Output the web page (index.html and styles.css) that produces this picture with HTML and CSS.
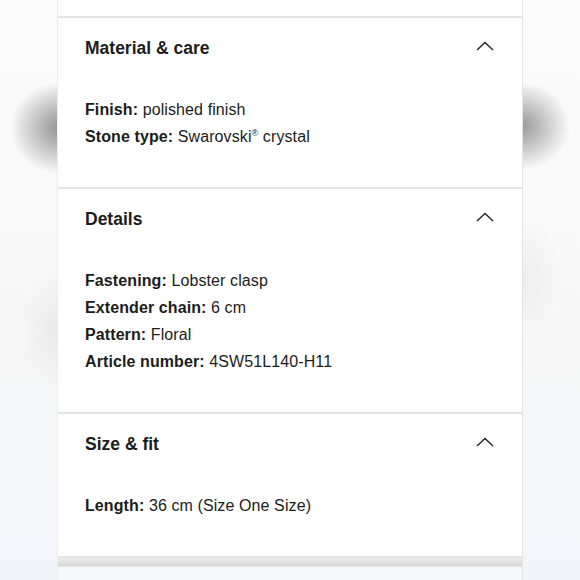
FILE: index.html
```html
<!DOCTYPE html>
<html lang="en">
<head>
    <meta charset="UTF-8">
    <meta name="viewport" content="width=device-width, initial-scale=1.0">
    <title>Product information</title>
    <link rel="stylesheet" href="styles.css">
</head>
<body>
    <div class="panel">
        <div class="panel-top"></div>

        <section class="accordion">
            <div class="accordion-header">
                <h2>Material &amp; care</h2>
                <svg class="chevron" viewBox="0 0 18 10" width="18" height="10"><polyline points="1,9 9,1.5 17,9"/></svg>
            </div>
            <ul class="accordion-body">
                <li><b>Finish:</b> polished finish</li>
                <li><b>Stone type:</b> Swarovski<sup>®</sup> crystal</li>
            </ul>
        </section>

        <section class="accordion">
            <div class="accordion-header">
                <h2>Details</h2>
                <svg class="chevron" viewBox="0 0 18 10" width="18" height="10"><polyline points="1,9 9,1.5 17,9"/></svg>
            </div>
            <ul class="accordion-body">
                <li><b>Fastening:</b> Lobster clasp</li>
                <li><b>Extender chain:</b> 6 cm</li>
                <li><b>Pattern:</b> Floral</li>
                <li><b>Article number:</b> 4SW51L140-H11</li>
            </ul>
        </section>

        <section class="accordion">
            <div class="accordion-header">
                <h2>Size &amp; fit</h2>
                <svg class="chevron" viewBox="0 0 18 10" width="18" height="10"><polyline points="1,9 9,1.5 17,9"/></svg>
            </div>
            <ul class="accordion-body">
                <li><b>Length:</b> 36 cm (Size One Size)</li>
            </ul>
        </section>

        <div class="panel-bottom"></div>
        <div class="panel-rest"></div>
    </div>
</body>
</html>
```

FILE: styles.css
```css
/* General Styles */
body {
    margin: 0;
    height: 580px;
    overflow: hidden;
    display: flex;
    justify-content: center;
    font-family: 'Liberation Sans', Arial, sans-serif;
    color: #1c1c1c;
    background-color: #f8f8f8;
    background-image:
        radial-gradient(ellipse 50px 46px at 60px 128px, rgba(0, 0, 0, 0.42), rgba(0, 0, 0, 0) 100%),
        radial-gradient(ellipse 50px 44px at 520px 126px, rgba(0, 0, 0, 0.4), rgba(0, 0, 0, 0) 100%),
        radial-gradient(ellipse 40px 60px at 58px 330px, rgba(0, 0, 0, 0.06), rgba(0, 0, 0, 0) 100%),
        radial-gradient(ellipse 40px 60px at 522px 280px, rgba(0, 0, 0, 0.04), rgba(0, 0, 0, 0) 100%),
        linear-gradient(180deg, #fbfbfb 0%, #f7f7f7 60%, #f2f5fa 100%);
}

.panel {
    width: 464px;
    display: flex;
    flex-direction: column;
    background-color: #ffffff;
    border-left: 1px solid #ededed;
    border-right: 1px solid #e4e4e4;
}

.panel-top {
    height: 16px;
}

/* Accordion */
.accordion {
    border-top: 2px solid #e4e4e4;
    padding: 17px 28px 37px 27px;
}

.accordion-header {
    display: flex;
    justify-content: space-between;
    align-items: flex-start;
}

.accordion-header h2 {
    margin: 0;
    font-size: 17.5px;
    line-height: 26px;
    font-weight: 700;
}

.chevron {
    margin-top: 6px;
    fill: none;
    stroke: #222;
    stroke-width: 1.4;
}

.accordion-body {
    list-style: none;
    margin: 35px 0 0;
    padding: 0;
    font-size: 16px;
    line-height: 27px;
}

.accordion-body li {
    letter-spacing: 0.1px;
}

.accordion-body b {
    font-weight: 700;
}

.accordion-body sup {
    font-size: 9px;
    line-height: 0;
    vertical-align: 6px;
}

.panel-bottom {
    border-top: 2px solid #e4e4e4;
    height: 9px;
    background: linear-gradient(180deg, #ececec, #dadada 80%, #e8e8e8);
}

.panel-rest {
    flex: 1;
    background-color: #f7f8fa;
}
```
